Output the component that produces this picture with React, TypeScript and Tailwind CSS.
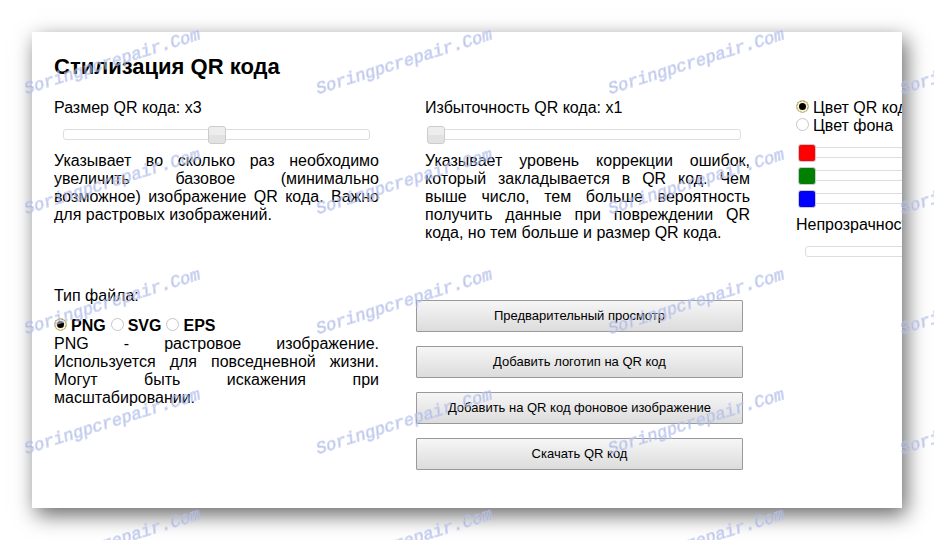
import React, { useState } from "react";
import clsx from "clsx";

const FILE_TYPES = ["PNG", "SVG", "EPS"];

const ACTIONS = [
  "Предварительный просмотр",
  "Добавить логотип на QR код",
  "Добавить на QR код фоновое изображение",
  "Скачать QR код",
];

const CHANNELS = [
  {
    name: "Красный",
    thumb:
      "[&::-webkit-slider-thumb]:h-[18px] [&::-webkit-slider-thumb]:bg-[#ff0000]",
  },
  {
    name: "Зелёный",
    thumb:
      "[&::-webkit-slider-thumb]:h-[18px] [&::-webkit-slider-thumb]:bg-[#008000]",
  },
  {
    name: "Синий",
    thumb:
      "[&::-webkit-slider-thumb]:h-[18px] [&::-webkit-slider-thumb]:bg-[#0000ff]",
  },
];

const GRAY_THUMB =
  "[&::-webkit-slider-thumb]:h-[18px] [&::-webkit-slider-thumb]:bg-linear-to-b [&::-webkit-slider-thumb]:from-[#ededed] [&::-webkit-slider-thumb]:from-50% [&::-webkit-slider-thumb]:to-[#e2e2e2] [&::-webkit-slider-thumb]:to-50%";

interface SliderProps {
  id: string;
  label?: string;
  value: number;
  min: number;
  max: number;
  thumb?: string;
  className?: string;
  onChange: (value: number) => void;
}

const Slider = ({
  id,
  label,
  value,
  min,
  max,
  thumb = GRAY_THUMB,
  className,
  onChange,
}: SliderProps) => {
  return (
    <div className={clsx("grid items-center", className)}>
      <div className="col-start-1 row-start-1 mx-[9px] h-[11px] rounded-[3px] border border-[#dddddd] bg-white" />
      <input
        id={id}
        type="range"
        aria-label={label}
        min={min}
        max={max}
        value={value}
        onChange={(e) => onChange(Number(e.target.value))}
        className={clsx(
          "col-start-1 row-start-1 mx-0.5 h-[18px] appearance-none bg-transparent",
          "[&::-webkit-slider-thumb]:w-[18px] [&::-webkit-slider-thumb]:appearance-none [&::-webkit-slider-thumb]:rounded-[3px] [&::-webkit-slider-thumb]:border [&::-webkit-slider-thumb]:border-[#cccccc]",
          thumb
        )}
      />
    </div>
  );
};

interface RadioProps {
  name: string;
  text: string;
  checked: boolean;
  onChange: () => void;
}

const Radio = ({ name, text, checked, onChange }: RadioProps) => {
  return (
    <label className="flex items-start gap-1 whitespace-nowrap">
      <input
        type="radio"
        name={name}
        checked={checked}
        onChange={onChange}
        className="mt-px h-[13px] w-[13px] shrink-0 appearance-none rounded-full border border-[#c6c6c6] bg-white checked:border-[#d9cb98] checked:bg-black checked:shadow-[inset_0_0_0_2px_#faf3cc]"
      />
      {text}
    </label>
  );
};

const Watermark = () => {
  return (
    <svg
      aria-hidden="true"
      className="pointer-events-none absolute inset-0 h-full w-full"
    >
      <defs>
        <pattern
          id="mark"
          x="13"
          y="-10"
          width="292"
          height="120"
          patternUnits="userSpaceOnUse"
        >
          <text
            transform="translate(13 104) rotate(-17.5)"
            fontFamily="'Liberation Mono', monospace"
            fontSize="17"
            fontStyle="italic"
            fill="#8f8fc4"
            stroke="#b9c6f0"
            strokeWidth="1"
            opacity="0.65"
          >
            Soringpcrepair.Com
          </text>
        </pattern>
      </defs>
      <rect width="100%" height="100%" fill="url(#mark)" />
    </svg>
  );
};

const App = () => {
  const [size, setSize] = useState(3);
  const [redundancy, setRedundancy] = useState(1);
  const [target, setTarget] = useState("code");
  const [rgb, setRgb] = useState([0, 0, 0]);
  const [opacity, setOpacity] = useState(100);
  const [fileType, setFileType] = useState("PNG");

  return (
    <div className="relative flex min-h-screen overflow-hidden bg-white p-8 font-['Liberation_Sans',Arial,sans-serif] text-base leading-[18px] text-black">
      <main className="min-w-0 flex-1 overflow-hidden bg-white px-[22px] pt-[23px] pb-8 shadow-[4px_7px_20px_rgba(0,0,0,0.6)]">
        <h1 className="mb-5 text-[22px] leading-6 font-bold">
          Стилизация QR кода
        </h1>

        <div className="flex gap-[46px]">
          <section className="w-[325px] shrink-0">
            <label htmlFor="size" className="block">
              Размер QR кода: x{size}
            </label>
            <Slider
              id="size"
              min={1}
              max={5}
              value={size}
              onChange={setSize}
              className="h-[35px]"
            />
            <p className="text-justify">
              Указывает во сколько раз необходимо увеличить базовое (минимально
              возможное) изображение QR кода. Важно для растровых изображений.
            </p>
          </section>

          <section className="w-[325px] shrink-0">
            <label htmlFor="redundancy" className="block">
              Избыточность QR кода: x{redundancy}
            </label>
            <Slider
              id="redundancy"
              min={1}
              max={4}
              value={redundancy}
              onChange={setRedundancy}
              className="h-[35px]"
            />
            <p className="text-justify">
              Указывает уровень коррекции ошибок, который закладывается в QR
              код. Чем выше число, тем больше вероятность получить данные при
              повреждении QR кода, но тем больше и размер QR кода.
            </p>
          </section>

          {/* runs past the right edge of the card */}
          <section className="w-[325px] shrink-0">
            <Radio
              name="target"
              text="Цвет QR кода"
              checked={target === "code"}
              onChange={() => setTarget("code")}
            />
            <Radio
              name="target"
              text="Цвет фона"
              checked={target === "background"}
              onChange={() => setTarget("background")}
            />
            <div className="py-[6px]">
              {CHANNELS.map((channel, i) => (
                <Slider
                  key={channel.name}
                  id={`channel-${i}`}
                  label={channel.name}
                  min={0}
                  max={255}
                  value={rgb[i]}
                  thumb={channel.thumb}
                  onChange={(v) => setRgb(rgb.map((c, j) => (j === i ? v : c)))}
                  className="h-[23px]"
                />
              ))}
            </div>
            <label htmlFor="opacity" className="block">
              Непрозрачность
            </label>
            <Slider
              id="opacity"
              min={0}
              max={100}
              value={opacity}
              onChange={setOpacity}
              className="h-[35px]"
            />
          </section>
        </div>

        <div className="mt-[18px] flex gap-[37px]">
          <section className="w-[325px] shrink-0">
            <p className="mb-3">Тип файла:</p>
            <div className="flex gap-[5px] font-bold">
              {FILE_TYPES.map((type) => (
                <Radio
                  key={type}
                  name="file-type"
                  text={type}
                  checked={fileType === type}
                  onChange={() => setFileType(type)}
                />
              ))}
            </div>
            <p className="text-justify">
              PNG - растровое изображение. Используется для повседневной жизни.
              Могут быть искажения при масштабировании.
            </p>
          </section>

          <div className="flex w-[327px] shrink-0 flex-col gap-[14px] pt-[13px]">
            {ACTIONS.map((action) => (
              <button
                key={action}
                type="button"
                className="h-8 rounded-[1px] border border-[#999999] bg-linear-to-b from-[#f6f6f6] to-[#dcdcdc] text-[13px] whitespace-nowrap"
              >
                {action}
              </button>
            ))}
          </div>
        </div>
      </main>
      <Watermark />
    </div>
  );
};

export default App;
